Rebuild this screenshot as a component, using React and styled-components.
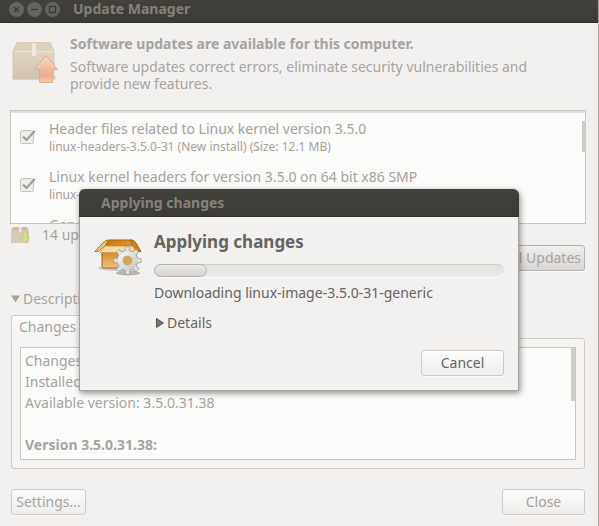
import React from "react";
import styled, { createGlobalStyle } from "styled-components";

const GlobalStyle = createGlobalStyle`
  * { box-sizing: border-box; }
  body {
    margin: 0;
    background: #f2f1f0;
    color: #a7a39f;
    font: 14px/18px "Noto Sans", "Open Sans", sans-serif;
  }
  button, input { font: inherit; color: inherit; }
  h1, h2, p, ul { margin: 0; padding: 0; }
`;

const Window = styled.div`
  position: relative;
  display: flex;
  flex-direction: column;
  min-height: 100vh;
  border-right: 1px solid #aaa6a3;
  overflow: hidden;
`;

const TitleBar = styled.header`
  display: flex;
  align-items: center;
  gap: 3px;
  height: 23px;
  margin-right: -1px;
  padding: 0 9px 4px;
  background: linear-gradient(#42413c, #3b3a36);
  border-bottom: 1px solid #33322e;
`;

const TitleText = styled.span`
  margin-left: 10px;
  color: #85817a;
  font-weight: 700;
`;

const WindowButton = styled.button`
  display: flex;
  width: 15px;
  height: 15px;
  padding: 0;
  border: 0;
  border-radius: 50%;
  background: #66645e;
  svg { display: block; }
`;

const Body = styled.main`
  flex: 1;
  display: flex;
  flex-direction: column;
  padding: 11px 13px 12px 11px;
`;

const Intro = styled.section`
  display: flex;
  gap: 11px;
  height: 76px;
`;

const IntroIcon = styled.div`
  padding: 6px 0 0 1px;
  svg { display: block; }
`;

const Heading = styled.h1`
  font-size: 14px;
  line-height: 20px;
  font-weight: 700;
`;

const Lead = styled.p`
  padding: 4px 32px 0 0;
  line-height: 17px;
`;

const UpdateList = styled.ul`
  display: flex;
  flex-direction: column;
  gap: 12px;
  height: 114px;
  padding: 8px 9px 0;
  overflow: hidden;
  list-style: none;
  background: #fbfbfa;
  border: 1px solid #c8c6c3;
  box-shadow: inset 0 2px #e2e0de;
`;

const ListFrame = styled.div`
  position: relative;
  margin: 0 -1px;
`;

const Thumb = styled.div`
  position: absolute;
  top: ${(p) => p.$top}px;
  right: 0;
  width: 4px;
  height: ${(p) => p.$length}px;
  background: #cfcdca;
`;

const Row = styled.li`
  flex: none;
`;

const RowLabel = styled.label`
  display: flex;
  align-items: center;
  gap: 13px;
  height: 36px;
`;

const Check = styled.span`
  display: flex;
  input { position: absolute; opacity: 0; margin: 0; width: 16px; height: 16px; }
  svg { display: block; }
  input:not(:checked) + svg path { display: none; }
`;

const Package = styled.span`
  display: block;
  padding-top: 1px;
  white-space: nowrap;
`;

const PackageInfo = styled.small`
  display: block;
  font-size: 12px;
  line-height: 17px;
`;

const Status = styled.div`
  display: flex;
  gap: 12px;
  height: 21px;
  align-items: center;
  svg { display: block; }
`;

const Actions = styled.div`
  display: flex;
  justify-content: ${(p) => (p.$spread ? "space-between" : "flex-end")};
`;

const Button = styled.button`
  min-width: ${(p) => p.$min}px;
  height: 26px;
  padding: 0 3px;
  border: 1px solid ${(p) => (p.$strong ? "#b5b2af" : "#cdcac7")};
  border-radius: 3px;
  color: ${(p) => (p.$active ? "#66645f" : "#a7a39f")};
  background: ${(p) => (p.$strong ? "linear-gradient(#f1f0ef, #d8d5d3)" : "linear-gradient(#fcfcfc, #efeeed)")};
  box-shadow: 0 1px #f9f9f8;
`;

const Expander = styled.button`
  display: flex;
  align-items: center;
  gap: 3px;
  height: 18px;
  padding: 0;
  border: 0;
  background: none;
`;

const Description = styled.section`
  display: flex;
  flex-direction: column;
  gap: 7px;
  padding: 19px 0 20px;
`;

const Tab = styled.button`
  position: relative;
  z-index: 1;
  width: 73px;
  height: 24px;
  padding: 0 0 1px 7px;
  text-align: left;
  border: 1px solid #d0cecb;
  border-bottom: 0;
  border-radius: 3px 3px 0 0;
  background: linear-gradient(#fcfcfb, #f5f4f3);
`;

const Page = styled.div`
  height: 131px;
  margin-top: -1px;
  padding: 8px;
  border: 1px solid #cdcac7;
  border-radius: 0 3px 3px 3px;
  background: #f5f4f3;
`;

const ChangeLog = styled.div`
  position: relative;
  height: 113px;
  padding: 2px 4px;
  line-height: 21px;
  border: 1px solid #c8c6c3;
  background: #fbfbfa;
`;

const Entry = styled.p`
  min-height: 21px;
  font-weight: ${(p) => (p.$bold ? 700 : 400)};
`;

const Overlay = styled.div`
  position: absolute;
  inset: 0;
  z-index: 2;
  display: flex;
  align-items: flex-start;
  justify-content: center;
  padding-top: 189px;
`;

const Dialog = styled.section`
  width: 440px;
  max-width: 100%;
  color: #66645f;
  background: #f2f1f0;
  border: 1px solid #a3a09d;
  border-top: 0;
  border-radius: 6px 6px 0 0;
  box-shadow: 1px 2px 6px rgba(0, 0, 0, 0.45);
`;

const DialogTitle = styled.header`
  height: 28px;
  margin: 0 -1px;
  padding: 0 22px;
  color: #85817a;
  line-height: 27px;
  font-weight: 700;
  border-radius: 6px 6px 0 0;
  border-bottom: 1px solid #2f2e2b;
  background: linear-gradient(#42413c, #3b3a36);
`;

const DialogBody = styled.div`
  display: flex;
  gap: 12px;
  padding: 14px;
  svg { display: block; }
`;

const DialogContent = styled.div`
  flex: 1;
  min-width: 0;
`;

const DialogIcon = styled.div`
  padding-top: 6px;
`;

const DialogHeading = styled.h2`
  font-size: 17px;
  line-height: 22px;
  font-weight: 700;
`;

const Track = styled.div`
  height: 13px;
  margin: 11px 0 7px;
  border-radius: 7px;
  border-top: 1px solid #cfcdca;
  background: linear-gradient(#e3e1e0, #eeedec);
  box-shadow: 0 1px #fbfbfa;
`;

const Fill = styled.div`
  width: 15%;
  height: 13px;
  margin-top: -1px;
  border: 1px solid #b5b2af;
  border-radius: 7px;
  background: linear-gradient(#e9e8e7, #d5d3d1);
`;

const DialogExpander = styled(Expander)`
  margin: 12px 0 18px 2px;
`;

function CheckBox() {
  return (
    <Check>
      <input type="checkbox" defaultChecked />
      <svg width="16" height="16" viewBox="0 0 16 16">
        <rect x=".5" y="1.5" width="13" height="13" rx="2" fill="#efeeec" stroke="#c4c1be" />
        <path d="M3 7.5 6.5 11 14.7 2" fill="none" stroke="#a19e9a" strokeWidth="2.2" />
      </svg>
    </Check>
  );
}

function ClosedBox() {
  return (
    <svg width="47" height="46" viewBox="0 0 47 46" aria-hidden="true">
      <defs>
        <linearGradient id="card" x2="0" y2="1"><stop stopColor="#e6dccb" /><stop offset="1" stopColor="#d0c3ae" /></linearGradient>
        <linearGradient id="arrow" x2="0" y2="1"><stop stopColor="#f3d8b8" /><stop offset=".75" stopColor="#efac8e" /><stop offset="1" stopColor="#f4cfba" /></linearGradient>
      </defs>
      <rect x="0" y="35" width="44" height="5" rx="2" fill="#dddad6" />
      <path d="M5 2.5h33l4 8.5v28H1V11z" fill="url(#card)" stroke="#d6c9b5" />
      <path d="M5 2.5h33l4 8.5H1z" fill="#ddd1be" />
      <path d="M2 11.5h39" stroke="#ebe3d6" />
      <path d="M20 3h4v13h-4z" fill="#eee8df" />
      <path d="M34 15.5 45.500 29.500H40.500v13H27.500v-13H22.500z" fill="url(#arrow)" stroke="#e9a78f" />
      <path d="M26 28 34 18l8 10" fill="none" stroke="#f8dfcd" strokeWidth=".8" />
    </svg>
  );
}

function SmallBox() {
  return (
    <svg width="19" height="18" viewBox="0 0 19 18" aria-hidden="true">
      <path d="M2.500 1h13L18 4.500V17H0V4.500z" fill="#d7cab6" />
      <path d="M2.500 1h13L18 4.500H0z" fill="#cdbca3" />
      <path d="M8 1h2.500v5H8z" fill="#ece5da" />
      <path d="M12 6h4v5h2.500L14 16.500 9.500 11H12z" fill="#cfe087" stroke="#b8cc75" strokeWidth=".8" />
    </svg>
  );
}

function OpenBox() {
  const teeth = [0, 45, 90, 135, 180, 225, 270, 315];
  return (
    <svg width="48" height="40" viewBox="0 0 48 40" aria-hidden="true">
      <defs>
        <linearGradient id="front" x2="0" y2="1"><stop stopColor="#c98a30" /><stop offset=".35" stopColor="#d99a3f" /><stop offset="1" stopColor="#f0c383" /></linearGradient>
        <linearGradient id="inside"><stop stopColor="#c47a12" /><stop offset="1" stopColor="#e09b31" /></linearGradient>
        <linearGradient id="gear" x2="1" y2="1"><stop stopColor="#fafafa" /><stop offset="1" stopColor="#c5c5c5" /></linearGradient>
      </defs>
      <ellipse cx="25" cy="31" rx="21" ry="3" fill="#cbc8c4" />
      <ellipse cx="34" cy="36" rx="12" ry="2.500" fill="#b8b5b1" />
      <path d="M8 13h32v18H10q-2 0-2-2z" fill="url(#front)" stroke="#a86507" />
      <path d="M14.500 3h24L41 9H11z" fill="url(#inside)" stroke="#a86507" />
      <path d="M14.500 3 11 9 4 14.500H.800L9 6Q11.500 3 14.500 3z" fill="#f1c582" stroke="#b57216" />
      <path d="M36.500 3q4 0 5.500 3l5 8.500H44L38 9z" fill="#c88424" stroke="#a86507" />
      <path d="M11 9h28l3 6.500H6z" fill="#f7d9aa" stroke="#d89b45" strokeWidth=".8" />
      <g transform="translate(33.500 23.500)" fill="url(#gear)" stroke="#9b9b9b" strokeWidth=".8">
        <circle r="10" />
        {teeth.map((a) => <path key={a} d="M-3.500-9 -2.400-10.500 -1.700-13.800H1.700L2.400-10.500 3.500-9" transform={`rotate(${a})`} />)}
        <circle r="9.600" stroke="none" />
        <circle r="4.500" fill="#dda34d" stroke="#aaa" />
      </g>
    </svg>
  );
}

const packages = [
  ["Header files related to Linux kernel version 3.5.0", "linux-headers-3.5.0-31 (New install) (Size: 12.1 MB)"],
  ["Linux kernel headers for version 3.5.0 on 64 bit x86 SMP", "linux-headers-3.5.0-31-generic (New install)"],
  ["Generic Linux kernel headers", "linux-headers-generic"],
];

const controls = [
  ["Close window", "M5 5 10 10M10 5 5 10"],
  ["Minimize", "M4 7.5h7"],
  ["Maximize", "M4.5 4.5h6v6h-6z"],
];

export default function App() {
  return (
    <Window>
      <GlobalStyle />
      <TitleBar>
        {controls.map(([name, path]) => (
          <WindowButton key={name} aria-label={name}>
            <svg width="15" height="15"><path d={path} fill="none" stroke="#3a3935" strokeWidth="1.3" /></svg>
          </WindowButton>
        ))}
        <TitleText>Update Manager</TitleText>
      </TitleBar>
      <Body>
        <Intro>
          <IntroIcon><ClosedBox /></IntroIcon>
          <div>
            <Heading>Software updates are available for this computer.</Heading>
            <Lead>Software updates correct errors, eliminate security vulnerabilities and provide new features.</Lead>
          </div>
        </Intro>
        <ListFrame>
          <UpdateList>
            {packages.map(([name, info]) => (
              <Row key={name}>
                <RowLabel>
                  <CheckBox />
                  <span>
                    <Package>{name}</Package>
                    <PackageInfo>{info}</PackageInfo>
                  </span>
                </RowLabel>
              </Row>
            ))}
          </UpdateList>
          <Thumb $top={11} $length={31} />
        </ListFrame>
        <Status><SmallBox /><span>14 updates have been selected.</span></Status>
        <Actions><Button $strong>Install Updates</Button></Actions>
        <Description>
          <Expander aria-expanded="true">
            <svg width="9" height="8"><path d="M0 .5h9L4.5 7.5z" fill="#a5a29d" /></svg>
            Description of update
          </Expander>
          <div>
            <Tab>Changes</Tab>
            <Page>
              <ChangeLog>
                <Entry>Changes for the versions:</Entry>
                <Entry>Installed version: 3.5.0.17.19</Entry>
                <Entry>Available version: 3.5.0.31.38</Entry>
                <Entry />
                <Entry $bold>Version 3.5.0.31.38:</Entry>
                <Thumb $top={0} $length={53} />
              </ChangeLog>
            </Page>
          </div>
        </Description>
        <Actions $spread>
          <Button $min={75}>Settings...</Button>
          <Button $min={83}>Close</Button>
        </Actions>
      </Body>
      <Overlay>
        <Dialog role="dialog" aria-labelledby="dialog-title">
          <DialogTitle id="dialog-title">Applying changes</DialogTitle>
          <DialogBody>
            <DialogIcon><OpenBox /></DialogIcon>
            <DialogContent>
              <DialogHeading>Applying changes</DialogHeading>
              <Track role="progressbar" aria-label="Download progress" aria-valuenow={15}><Fill /></Track>
              <p>Downloading linux-image-3.5.0-31-generic</p>
              <DialogExpander aria-expanded="false">
                <svg width="8" height="10"><path d="M.5.5v9L7.5 5z" fill="#77756f" stroke="#55534e" /></svg>
                Details
              </DialogExpander>
              <Actions><Button $active $min={83}>Cancel</Button></Actions>
            </DialogContent>
          </DialogBody>
        </Dialog>
      </Overlay>
    </Window>
  );
}
